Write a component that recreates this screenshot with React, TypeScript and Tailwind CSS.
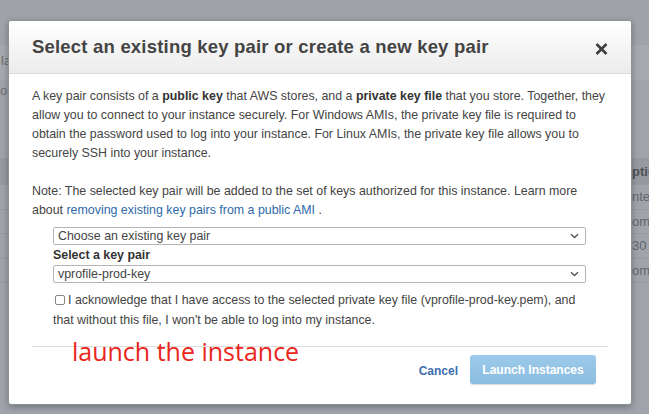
import React from "react";

function Chevron() {
  return (
    <svg width="9" height="6" viewBox="0 0 9 6" className="shrink-0">
      <path d="M1 1.2 L4.5 4.6 L8 1.2" fill="none" stroke="#555" strokeWidth="1.4" />
    </svg>
  );
}

function CloseX() {
  return (
    <svg width="13" height="12" viewBox="0 0 13 12" className="shrink-0">
      <path d="M1.5 1 L11.5 11 M11.5 1 L1.5 11" fill="none" stroke="#3f3f3f" strokeWidth="2.6" />
    </svg>
  );
}

export default function App() {
  return (
    <div
      className="relative w-[649px] h-[414px] overflow-hidden bg-[#a0a4aa]"
      style={{ fontFamily: '"Liberation Sans", Arial, sans-serif' }}
    >
      {/* background page (dimmed) */}
      <div className="flex flex-col w-full h-full">
        <div className="h-[45px] bg-[#9fa3a9]" />
        <div className="h-[35px] bg-[#a6aaaf] flex items-end justify-between text-[13px] text-[#6b6f74] pl-[1px]">
          <span className="mb-[10px]">la</span>
        </div>
        <div className="h-[78px] flex justify-start text-[13px] text-[#6b6f74]">
          <span className="mt-[1px]">o</span>
        </div>
        <div className="h-[27px] bg-[#969aa0] flex justify-end text-[13px] font-bold text-[#4d5156] items-center">
          <span className="w-[17px] overflow-hidden whitespace-nowrap">ptio</span>
        </div>
        <div className="flex flex-col items-end text-[13px] text-[#62666b]">
          <div className="h-[25px] w-full border-b border-[#989ca1] flex items-center justify-end"><span className="w-[17px] overflow-hidden whitespace-nowrap">nte</span></div>
          <div className="h-[24px] w-full border-b border-[#989ca1] flex items-center justify-end"><span className="w-[17px] overflow-hidden whitespace-nowrap">om</span></div>
          <div className="h-[25px] w-full border-b border-[#989ca1] flex items-center justify-end"><span className="w-[17px] overflow-hidden whitespace-nowrap">30</span></div>
          <div className="h-[24px] w-full border-b border-[#989ca1] flex items-center justify-end"><span className="w-[17px] overflow-hidden whitespace-nowrap">om</span></div>
        </div>
      </div>

      {/* modal */}
      <div className="absolute left-[8px] top-[20px] w-[624px] h-[385px] bg-white rounded-[3px] border border-[#8d9196] shadow-[0_2px_6px_rgba(0,0,0,0.3)] flex flex-col">
        <div className="h-[53px] shrink-0 bg-gradient-to-b from-white to-[#ececec] border-b border-[#dcdcdc] flex items-center justify-between pl-[23px] pr-[23px] rounded-t-[3px]">
          <span className="text-[18.5px] font-bold text-[#444] tracking-[0.2px] whitespace-nowrap">
            Select an existing key pair or create a new key pair
          </span>
          <span className="mt-[3px]">
            <CloseX />
          </span>
        </div>
        <div className="flex flex-col px-[23px] pt-[13px] text-[12.4px] leading-[19px] text-[#444] whitespace-nowrap">
          <p>
            A key pair consists of a <b className="text-[#333]">public key</b> that AWS stores, and a{" "}
            <b className="text-[#333]">private key file</b> that you store. Together, they
            <br />
            allow you to connect to your instance securely. For Windows AMIs, the private key file is required to
            <br />
            obtain the password used to log into your instance. For Linux AMIs, the private key file allows you to
            <br />
            securely SSH into your instance.
          </p>
          <p className="mt-[19px]">
            Note: The selected key pair will be added to the set of keys authorized for this instance. Learn more
            <br />
            about <span className="text-[#2f6aa8]">removing existing key pairs from a public AMI</span> .
          </p>
          <div className="flex flex-col pl-[21px] pr-[22px] mt-[7px]">
            <div className="h-[18px] border border-[#b5b5b5] rounded-[2px] flex items-center justify-between pl-[4px] pr-[6px] text-[12.4px] text-[#444]">
              <span>Choose an existing key pair</span>
              <Chevron />
            </div>
            <div className="font-bold text-[12.4px] leading-[19px] text-[#333] mt-[1px]">Select a key pair</div>
            <div className="h-[18px] border border-[#b5b5b5] rounded-[2px] flex items-center justify-between pl-[4px] pr-[6px] text-[12.4px] text-[#444]">
              <span>vprofile-prod-key</span>
              <Chevron />
            </div>
            <div className="mt-[7px] leading-[20px]">
              <span className="inline-block w-[10px] h-[10px] border border-[#888] rounded-[2px] align-[-1px] mr-[3px] ml-[2px]" />
              I acknowledge that I have access to the selected private key file (vprofile-prod-key.pem), and
              <br />
              that without this file, I won't be able to log into my instance.
            </div>
          </div>
          <div className="mt-[16px] border-t border-[#dcdcdc]" />
        </div>
        <div className="flex items-start justify-between pl-[63px] pr-[35px]">
          <span
            className="text-[25px] text-[#e8261c] leading-none -mt-[8px] whitespace-nowrap"
            style={{ fontFamily: '"Open Sans", "Noto Sans", sans-serif' }}
          >
            launch the instance
          </span>
          <div className="flex items-center gap-[12px] mt-[8px]">
            <span className="text-[12px] font-bold text-[#3d6fae] mt-[3px]">Cancel</span>
            <div className="h-[29px] w-[126px] rounded-[3px] bg-gradient-to-b from-[#9ccaea] to-[#8bbde0] flex items-center justify-center text-[12px] font-bold text-white shadow-[0_1px_1px_rgba(0,0,0,0.15)]">
              Launch Instances
            </div>
          </div>
        </div>
      </div>
    </div>
  );
}
